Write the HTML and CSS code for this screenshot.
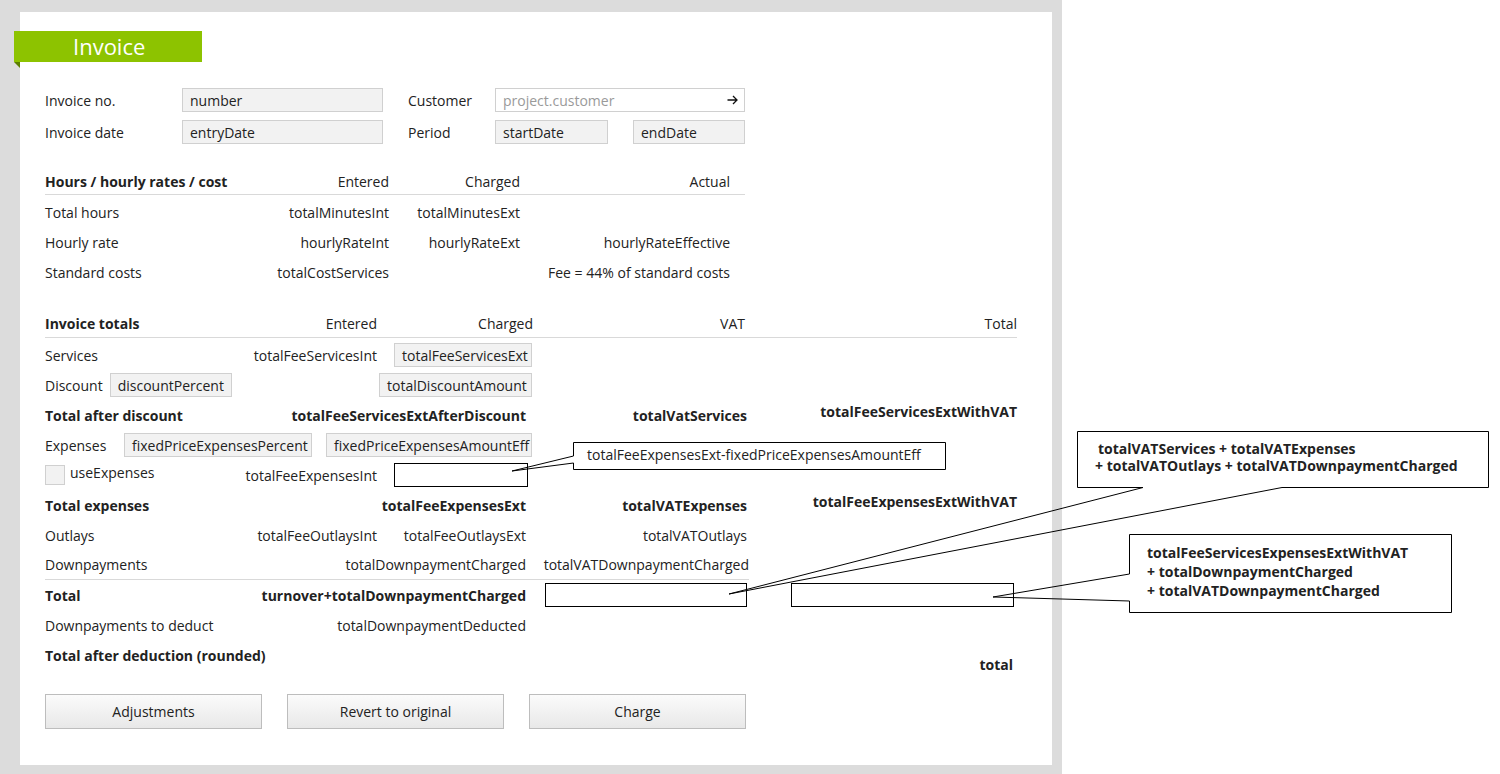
FILE: index.html
```html
<!DOCTYPE html>
<html lang="en">
<head>
  <meta charset="UTF-8">
  <title>Invoice</title>
  <link rel="stylesheet" href="styles.css">
</head>
<body>
  <!-- Grey frame + white panel -->
  <div class="frame">
    <div class="panel">
      <div class="ribbon">Invoice</div>

      <!-- Header form -->
      <div class="head-form">
        <div class="form-row">
          <span class="lbl">Invoice no.</span>
          <span class="field f-wide">number</span>
          <span class="lbl lbl-2">Customer</span>
          <span class="field lookup">project.customer
            <svg class="arrow" width="11" height="10" viewBox="0 0 11 10"><path d="M0.5,5 H10 M6,1 L10,5 L6,9" /></svg>
          </span>
        </div>
        <div class="form-row">
          <span class="lbl">Invoice date</span>
          <span class="field f-wide">entryDate</span>
          <span class="lbl lbl-2">Period</span>
          <span class="field f-date">startDate</span>
          <span class="field f-date f-end">endDate</span>
        </div>
      </div>

      <!-- Hours -->
      <div class="hours">
        <div class="hours-head">
          <span class="b">Hours / hourly rates / cost</span>
          <span class="r">Entered</span>
          <span class="r">Charged</span>
          <span class="r last">Actual</span>
        </div>
        <div class="hours-row">
          <span>Total hours</span>
          <span class="r">totalMinutesInt</span>
          <span class="r">totalMinutesExt</span>
          <span></span>
        </div>
        <div class="hours-row">
          <span>Hourly rate</span>
          <span class="r">hourlyRateInt</span>
          <span class="r">hourlyRateExt</span>
          <span class="r last">hourlyRateEffective</span>
        </div>
        <div class="hours-row">
          <span>Standard costs</span>
          <span class="r">totalCostServices</span>
          <span></span>
          <span class="r last">Fee = 44% of standard costs</span>
        </div>
      </div>

      <!-- Invoice totals -->
      <div class="totals-head">
        <span class="b">Invoice totals</span>
        <span class="r">Entered</span>
        <span class="r">Charged</span>
        <span class="r vat-h">VAT</span>
        <span class="r">Total</span>
      </div>
      <div class="totals">
        <div class="c">Services</div>
        <div class="c r">totalFeeServicesInt</div>
        <div class="c r"><span class="field f-svc">totalFeeServicesExt</span></div>
        <div class="c"></div>
        <div class="c"></div>

        <div class="c">Discount<span class="field f-disc">discountPercent</span></div>
        <div class="c"></div>
        <div class="c r"><span class="field f-damt">totalDiscountAmount</span></div>
        <div class="c"></div>
        <div class="c"></div>

        <div class="c b">Total after discount</div>
        <div class="c r b s2 pr">totalFeeServicesExtAfterDiscount</div>
        <div class="c r b vat">totalVatServices</div>
        <div class="c r b up">totalFeeServicesExtWithVAT</div>

        <div class="c s3"><span class="exp-lbl">Expenses</span><span class="field f-pct">fixedPriceExpensesPercent</span><span class="field f-eff">fixedPriceExpensesAmountEff</span></div>
        <div class="c"></div>
        <div class="c"></div>

        <div class="c"><span class="check"></span><span class="check-lbl">useExpenses</span></div>
        <div class="c r">totalFeeExpensesInt</div>
        <div class="c r"><span class="blank b-exp"></span></div>
        <div class="c"></div>
        <div class="c"></div>

        <div class="c b">Total expenses</div>
        <div class="c r b s2 pr">totalFeeExpensesExt</div>
        <div class="c r b">totalVATExpenses</div>
        <div class="c r b up">totalFeeExpensesExtWithVAT</div>

        <div class="c">Outlays</div>
        <div class="c r">totalFeeOutlaysInt</div>
        <div class="c r pr">totalFeeOutlaysExt</div>
        <div class="c r">totalVATOutlays</div>
        <div class="c"></div>

        <div class="c sep">Downpayments</div>
        <div class="c r s2 pr sep">totalDownpaymentCharged</div>
        <div class="c r sep wide">totalVATDownpaymentCharged</div>
        <div class="c"></div>

        <div class="c b">Total</div>
        <div class="c r b s2 pr">turnover+totalDownpaymentCharged</div>
        <div class="c"><span class="blank b-vat"></span></div>
        <div class="c"><span class="blank b-tot"></span></div>

        <div class="c">Downpayments to deduct</div>
        <div class="c r s2 pr">totalDownpaymentDeducted</div>
        <div class="c"></div>
        <div class="c"></div>

        <div class="c b s2">Total after deduction (rounded)</div>
        <div class="c"></div>
        <div class="c"></div>
        <div class="c r b down">total</div>
      </div>

      <!-- Buttons -->
      <div class="buttons">
        <button class="btn">Adjustments</button>
        <button class="btn">Revert to original</button>
        <button class="btn">Charge</button>
      </div>
    </div>
  </div>

  <!-- Annotations -->
  <svg class="pointers" width="1500" height="774" viewBox="0 0 1500 774">
    <path d="M573.5,442.5 H945.5 V469.5 H573.5 V463 L512,471 L573.5,456 Z" />
    <path d="M1077.5,431.5 H1488.5 V487.5 H1282 L729,594 L1143,487.5 H1077.5 Z" />
    <path d="M1129.5,534.5 H1451.5 V612.5 H1129.5 V601 L993,597 L1129.5,574 Z" />
  </svg>
  <div class="note note-1">totalFeeExpensesExt-fixedPriceExpensesAmountEff</div>
  <div class="note note-2">
    <div class="indent">totalVATServices + totalVATExpenses</div>
    <div>+ totalVATOutlays + totalVATDownpaymentCharged</div>
  </div>
  <div class="note note-3">
    <div>totalFeeServicesExpensesExtWithVAT</div>
    <div>+ totalDownpaymentCharged</div>
    <div>+ totalVATDownpaymentCharged</div>
  </div>
</body>
</html>
```

FILE: styles.css
```css
/* Reset */
* {
  margin: 0;
  padding: 0;
  box-sizing: border-box;
}

body {
  font-family: "Open Sans", "Noto Sans", sans-serif;
  font-size: 14px;
  color: #222;
  background: #fff;
  width: 1500px;
  height: 774px;
  position: relative;
  overflow: hidden;
}

/* Frame */
.frame {
  width: 1062px;
  height: 774px;
  background: #dcdcdc;
  padding: 12px 10px 9px 20px;
}

.panel {
  background: #fff;
  height: 100%;
  padding-left: 25px;
  padding-top: 19px;
}

.ribbon {
  position: relative;
  width: 188px;
  height: 31px;
  margin-left: -31px;
  background: #8dc300;
  color: #fff;
  font-size: 22px;
  line-height: 31px;
  padding-left: 59px;
}

.ribbon::after {
  content: "";
  position: absolute;
  left: 0;
  top: 31px;
  border-top: 6px solid #5c7f00;
  border-left: 6px solid transparent;
}

.b {
  font-weight: bold;
}

.r {
  text-align: right;
  justify-content: flex-end;
}

/* Header form */
.head-form {
  margin-top: 26px;
  display: flex;
  flex-direction: column;
  gap: 8px;
}

.form-row {
  display: flex;
  align-items: center;
  height: 24px;
}

.lbl {
  width: 137px;
}

.lbl-2 {
  width: 87px;
  margin-left: 25px;
}

.field {
  display: inline-flex;
  align-items: center;
  height: 24px;
  padding-left: 7px;
  background: #f2f2f2;
  border: 1px solid #d0d0d0;
  white-space: nowrap;
}

.f-wide {
  width: 201px;
}

.lookup {
  width: 250px;
  background: #fff;
  color: #9a9a9a;
  justify-content: space-between;
  padding-right: 6px;
}

.arrow path {
  fill: none;
  stroke: #111;
  stroke-width: 1.3;
}

.f-date {
  width: 113px;
}

.f-end {
  margin-left: 25px;
  width: 112px;
}

/* Hours table */
.hours {
  margin-top: 25px;
  width: 700px;
}

.hours-head,
.hours-row {
  display: grid;
  grid-template-columns: 205px 139px 131px 225px;
  align-items: center;
  white-space: nowrap;
}

.hours-head {
  height: 26px;
  border-bottom: 1px solid #d9d9d9;
  margin-bottom: 2px;
}

.hours-row {
  height: 30px;
}

.hours .last {
  padding-right: 15px;
}

/* Invoice totals */
.totals-head {
  margin-top: 23px;
  width: 972px;
  height: 28px;
  display: grid;
  grid-template-columns: 204px 128px 156px 214px 270px;
  align-items: center;
  border-bottom: 1px solid #d9d9d9;
  white-space: nowrap;
}

.totals-head .vat-h {
  padding-right: 2px;
}

.totals {
  margin-top: 2px;
  width: 972px;
  display: grid;
  grid-template-columns: 204px 128px 156px 214px 270px;
  grid-auto-rows: 30px;
}

.c {
  display: flex;
  align-items: center;
  white-space: nowrap;
}

.s2 {
  grid-column: span 2;
}

.s3 {
  grid-column: span 3;
}

.pr {
  padding-right: 7px;
}

.up {
  padding-bottom: 8px;
}

.down {
  padding-right: 4px;
  padding-top: 18px;
}

.wide {
  margin-right: -2px;
}

.sep {
  border-bottom: 1px solid #d9d9d9;
}

.f-svc {
  width: 138px;
  margin-right: 1px;
}

.f-disc {
  width: 122px;
  margin-left: 7px;
}

.f-damt {
  width: 153px;
  margin-right: 1px;
}

.exp-lbl {
  width: 79px;
}

.f-pct {
  width: 188px;
}

.f-eff {
  width: 206px;
  margin-left: 14px;
}

.check {
  width: 20px;
  height: 20px;
  background: #f2f2f2;
  border: 1px solid #d0d0d0;
  margin-right: 5px;
}

.check-lbl {
  margin-top: -6px;
}

.blank {
  display: block;
  height: 24px;
  border: 1px solid #000;
  background: #fff;
}

.b-exp {
  width: 134px;
  margin-right: 5px;
}

.b-vat {
  width: 203px;
  margin-left: 12px;
}

.b-tot {
  width: 223px;
  margin-left: 44px;
}

/* Buttons */
.buttons {
  margin-top: 24px;
  display: flex;
  gap: 25px;
}

.btn {
  width: 217px;
  height: 35px;
  font-family: inherit;
  font-size: 14px;
  color: #222;
  background: linear-gradient(#fbfbfb, #e8e8e8);
  border: 1px solid #bdbdbd;
}

/* Annotations */
.pointers {
  position: absolute;
  left: 0;
  top: 0;
}

.pointers path {
  fill: none;
  stroke: #000;
  stroke-width: 1;
}

.note {
  position: absolute;
  white-space: nowrap;
}

.note-1 {
  left: 587px;
  top: 445px;
  line-height: 20px;
}

.note-2 {
  left: 1095px;
  top: 440px;
  font-weight: bold;
  line-height: 17px;
}

.note-2 .indent {
  padding-left: 3px;
}

.note-3 {
  left: 1147px;
  top: 543px;
  font-weight: bold;
  line-height: 19px;
}
```
